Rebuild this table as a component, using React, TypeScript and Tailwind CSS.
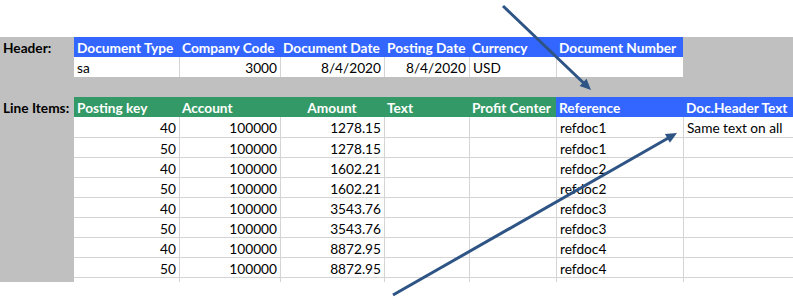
const headerCols = [
  { label: "Document Type", value: "sa", align: "left" },
  { label: "Company Code", value: "3000", align: "right" },
  { label: "Document Date", value: "8/4/2020", align: "right" },
  { label: "Posting Date", value: "8/4/2020", align: "right" },
  { label: "Currency", value: "USD", align: "left" },
  { label: "Document Number", value: "", align: "left" },
] as const;

const itemCols = [
  { label: "Posting key", bg: "bg-[#339966]", head: "text-left" },
  { label: "Account", bg: "bg-[#339966]", head: "text-left" },
  { label: "Amount", bg: "bg-[#339966]", head: "text-center" },
  { label: "Text", bg: "bg-[#339966]", head: "text-left" },
  { label: "Profit Center", bg: "bg-[#339966]", head: "text-left" },
  { label: "Reference", bg: "bg-[#3366ff]", head: "text-left" },
  { label: "Doc.Header Text", bg: "bg-[#3366ff]", head: "text-left" },
];

const amounts = ["1278.15", "1278.15", "1602.21", "1602.21", "3543.76", "3543.76", "8872.95", "8872.95"];

const rows = amounts.map((amount, i) => [
  i % 2 === 0 ? "40" : "50",
  "100000",
  amount,
  "",
  "",
  `refdoc${Math.floor(i / 2) + 1}`,
  i === 0 ? "Same text on all" : "",
]);

const rightAligned = [0, 1, 2];

const cell = "h-[20px] overflow-hidden whitespace-nowrap px-[3px] leading-[22px]";

const App = (): JSX.Element => {
  return (
    <div className="relative h-[304px] w-[793px] overflow-hidden bg-white font-['Lato','Liberation_Sans',sans-serif] text-[13.7px] text-black">
      <div className="h-[37px]" />

      <div className="grid grid-cols-[74px_105px_101px_104px_85px_87px_127px_110px] bg-[#c0c0c0]">
        {/* header block */}
        <div className={`${cell} font-bold`}>Header:</div>
        {headerCols.map((col) => (
          <div key={col.label} className={`${cell} bg-[#3366ff] font-bold text-white`}>
            {col.label}
          </div>
        ))}
        <div className={cell} />

        <div className={cell} />
        {headerCols.map((col, i) => (
          <div
            key={col.label}
            className={`${cell} bg-white ${i > 0 ? "border-l border-[#d4d4d4]" : ""} ${
              col.align === "right" ? "text-right" : "text-left"
            }`}
          >
            {col.value}
          </div>
        ))}
        <div className={cell} />

        <div className="col-span-8 h-[20px]" />

        {/* line items */}
        <div className={`${cell} font-bold`}>Line Items:</div>
        {itemCols.map((col) => (
          <div key={col.label} className={`${cell} ${col.bg} ${col.head} font-bold text-white`}>
            {col.label}
          </div>
        ))}

        {rows.map((row, r) => (
          <div key={r} className="contents">
            <div className={cell} />
            {row.map((value, c) => (
              <div
                key={c}
                className={`${cell} bg-white border-[#d4d4d4] ${r > 0 ? "border-t" : ""} ${
                  c > 0 ? "border-l" : ""
                } ${rightAligned.includes(c) ? "text-right" : "text-left"}`}
              >
                {value}
              </div>
            ))}
          </div>
        ))}

        <div className="h-[5px]" />
        {itemCols.map((col, c) => (
          <div
            key={col.label}
            className={`h-[5px] bg-white border-t border-[#d4d4d4] ${c > 0 ? "border-l" : ""}`}
          />
        ))}
      </div>

      {/* callout arrows */}
      <svg className="pointer-events-none absolute inset-0" width="793" height="304" viewBox="0 0 793 304">
        <line x1="503" y1="6" x2="585.2" y2="84.5" stroke="#2e5486" strokeWidth="3" />
        <polygon points="591,90 579.6,86 586.5,78.8" fill="#2e5486" />
        <line x1="393" y1="295" x2="670.1" y2="137" stroke="#2e5486" strokeWidth="3" />
        <polygon points="677,133 669.9,142.7 664.9,134.1" fill="#2e5486" />
      </svg>
    </div>
  );
};

export default App;
